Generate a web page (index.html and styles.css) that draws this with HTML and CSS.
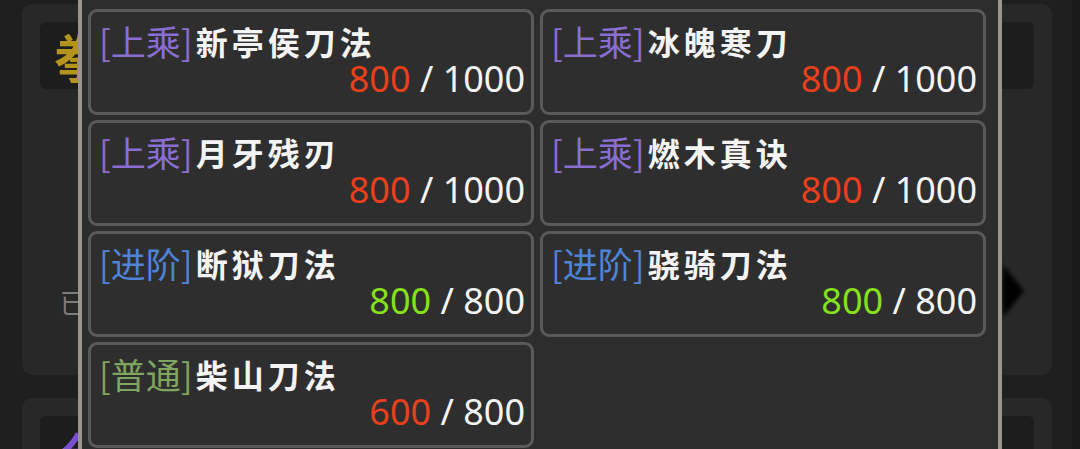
FILE: index.html
```html
<!DOCTYPE html>
<html lang="zh-CN">
<head>
<meta charset="utf-8">
<title>刀法</title>
<link rel="stylesheet" href="styles.css">
</head>
<body>
  <div class="page">
    <section class="sect">
      <div class="sect-head"><span class="sect-mark gold">拳</span></div>
      <div class="sect-body">
        <span class="sect-note">已学</span>
        <svg class="sect-arrow" width="26" height="60" viewBox="0 0 26 60">
          <defs><filter id="soft"><feGaussianBlur stdDeviation="2"/></filter></defs>
          <path d="M2 4 L23 30 L2 56 Z" fill="#000" filter="url(#soft)"/>
        </svg>
      </div>
    </section>
    <section class="sect">
      <div class="sect-head sect-head-top"><span class="sect-mark violet">剑</span></div>
    </section>
  </div>

  <div class="panel">
    <div class="skill-grid">
      <div class="skill">
        <div class="skill-title"><span class="tier tier-top">[上乘]</span><span class="skill-name">新亭侯刀法</span></div>
        <div class="skill-prog"><span class="cur low">800</span> / 1000</div>
      </div>
      <div class="skill">
        <div class="skill-title"><span class="tier tier-top">[上乘]</span><span class="skill-name">冰魄寒刀</span></div>
        <div class="skill-prog"><span class="cur low">800</span> / 1000</div>
      </div>
      <div class="skill">
        <div class="skill-title"><span class="tier tier-top">[上乘]</span><span class="skill-name">月牙残刃</span></div>
        <div class="skill-prog"><span class="cur low">800</span> / 1000</div>
      </div>
      <div class="skill">
        <div class="skill-title"><span class="tier tier-top">[上乘]</span><span class="skill-name">燃木真诀</span></div>
        <div class="skill-prog"><span class="cur low">800</span> / 1000</div>
      </div>
      <div class="skill">
        <div class="skill-title"><span class="tier tier-mid">[进阶]</span><span class="skill-name">断狱刀法</span></div>
        <div class="skill-prog"><span class="cur full">800</span> / 800</div>
      </div>
      <div class="skill">
        <div class="skill-title"><span class="tier tier-mid">[进阶]</span><span class="skill-name">骁骑刀法</span></div>
        <div class="skill-prog"><span class="cur full">800</span> / 800</div>
      </div>
      <div class="skill">
        <div class="skill-title"><span class="tier tier-base">[普通]</span><span class="skill-name">柴山刀法</span></div>
        <div class="skill-prog"><span class="cur low">600</span> / 800</div>
      </div>
    </div>
  </div>
</body>
</html>
```

FILE: styles.css
```css
html, body {
  margin: 0;
  padding: 0;
}

body {
  width: 1080px;
  height: 449px;
  overflow: hidden;
  position: relative;
  background: linear-gradient(to right, #1f1f1f 1072px, #1a1a1a 1072px);
  font-family: "Noto Sans", "Noto Sans CJK SC", sans-serif;
}

/* page underneath the popup */
.page {
  display: flex;
  flex-direction: column;
  gap: 23px;
  padding: 4px 28px 0 22px;
}

.sect {
  height: 371px;
  box-sizing: border-box;
  background: #282828;
  border-radius: 10px;
  padding: 18px 18px 0 18px;
  display: flex;
  flex-direction: column;
  flex-shrink: 0;
}

.sect-head {
  height: 67px;
  background: #1d1d1d;
  border-radius: 6px;
  display: flex;
  align-items: center;
  padding-left: 14px;
}

.sect-head-top {
  align-items: flex-start;
  padding-top: 14px;
  padding-left: 20px;
  box-sizing: border-box;
}

.sect-mark {
  font-family: "Noto Sans CJK SC", sans-serif;
  font-size: 52px;
  font-weight: 700;
  line-height: 1;
}

.gold { color: #b3941f; }
.violet { color: #7a4fd0; }

.sect-body {
  flex: 1;
  display: flex;
  align-items: flex-start;
  justify-content: space-between;
  padding-top: 172px;
}

.sect-note {
  font-family: "Noto Sans CJK SC", sans-serif;
  font-size: 26px;
  line-height: 30px;
  color: #7c7c7c;
  padding-left: 20px;
  margin-top: 26px;
}

.sect-arrow {
  margin-right: 7px;
}

/* popup listing the sword techniques */
.panel {
  position: absolute;
  left: 78px;
  top: 0;
  width: 924px;
  height: 470px;
  box-sizing: border-box;
  background: #2d2d2d;
  border-left: 4px solid #9a958d;
  border-right: 4px solid #9a958d;
  padding: 9px 12px 0 6px;
}

.skill-grid {
  display: grid;
  grid-template-columns: 1fr 1fr;
  column-gap: 6px;
  row-gap: 5px;
}

.skill {
  height: 106px;
  box-sizing: border-box;
  border: 3px solid #5a5a5a;
  border-radius: 9px;
  background: #2e2e2e;
  padding: 10px 6px 0 8px;
  display: flex;
  flex-direction: column;
}

.skill-title {
  display: flex;
  align-items: center;
  height: 38px;
  line-height: 38px;
  white-space: nowrap;
}

.tier {
  font-family: "Noto Sans CJK SC", sans-serif;
  font-size: 35px;
}

.tier-top { color: #8a6ed2; }
.tier-mid { color: #4f83d6; }
.tier-base { color: #7fa55e; }

.skill-name {
  font-family: "Noto Sans CJK SC", sans-serif;
  font-size: 32px;
  font-weight: 700;
  letter-spacing: 4px;
  color: #f4f4f4;
  margin-left: 3px;
}

.skill-prog {
  text-align: right;
  height: 38px;
  line-height: 38px;
  font-size: 36px;
  color: #f4f4f4;
  white-space: pre;
}

.cur.low { color: #e8401c; }
.cur.full { color: #86e01c; }
```
